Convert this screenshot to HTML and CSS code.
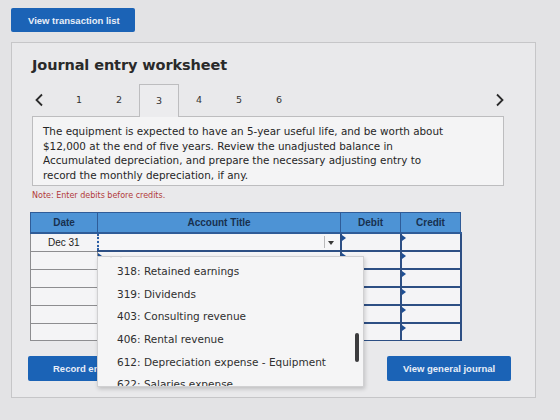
FILE: index.html
```html
<!DOCTYPE html>
<html lang="en">
<head>
<meta charset="UTF-8">
<meta name="viewport" content="width=device-width, initial-scale=1.0">
<title>Journal entry worksheet</title>
<link rel="stylesheet" href="styles.css">
</head>
<body>

<div class="page">
  <button class="btn btn-top">View transaction list</button>

  <div class="panel">
    <h1>Journal entry worksheet</h1>

    <div class="tabs">
      <span class="arrow">
        <svg width="10" height="14" viewBox="0 0 10 14"><polyline points="8,1.5 2.5,7 8,12.5" fill="none" stroke="#2b2b2b" stroke-width="1.8"/></svg>
      </span>
      <span class="tab">1</span>
      <span class="tab">2</span>
      <span class="tab active">3</span>
      <span class="tab">4</span>
      <span class="tab">5</span>
      <span class="tab">6</span>
      <span class="arrow right">
        <svg width="10" height="14" viewBox="0 0 10 14"><polyline points="2,1.5 7.5,7 2,12.5" fill="none" stroke="#2b2b2b" stroke-width="1.8"/></svg>
      </span>
    </div>

    <div class="question">
      The equipment is expected to have an 5-year useful life, and be worth about<br>
      $12,000 at the end of five years. Review the unadjusted balance in<br>
      Accumulated depreciation, and prepare the necessary adjusting entry to<br>
      record the monthly depreciation, if any.
    </div>

    <p class="note">Note: Enter debits before credits.</p>

    <div class="entry">
      <table class="journal">
        <thead>
          <tr>
            <th class="c-date">Date</th>
            <th class="c-acct">Account Title</th>
            <th class="c-num">Debit</th>
            <th class="c-num">Credit</th>
          </tr>
        </thead>
        <tbody>
          <tr>
            <td class="c-date">Dec 31</td>
            <td class="c-acct selected"><span class="caret"></span></td>
            <td class="c-num"></td>
            <td class="c-num"></td>
          </tr>
          <tr><td class="c-date"></td><td class="c-acct"></td><td class="c-num"></td><td class="c-num"></td></tr>
          <tr><td class="c-date"></td><td class="c-acct"></td><td class="c-num"></td><td class="c-num"></td></tr>
          <tr><td class="c-date"></td><td class="c-acct"></td><td class="c-num"></td><td class="c-num"></td></tr>
          <tr><td class="c-date"></td><td class="c-acct"></td><td class="c-num"></td><td class="c-num"></td></tr>
          <tr><td class="c-date"></td><td class="c-acct"></td><td class="c-num"></td><td class="c-num"></td></tr>
        </tbody>
      </table>

      <div class="actions">
        <button class="btn btn-record">Record entry</button>
        <button class="btn">View general journal</button>
      </div>

      <!-- open account picker -->
      <div class="picker">
        <ul>
          <li>318: Retained earnings</li>
          <li>319: Dividends</li>
          <li>403: Consulting revenue</li>
          <li>406: Rental revenue</li>
          <li>612: Depreciation expense - Equipment</li>
          <li>622: Salaries expense</li>
        </ul>
        <span class="thumb"></span>
      </div>
    </div>
  </div>
</div>

</body>
</html>
```

FILE: styles.css
```css
/* Page */
body {
  margin: 0;
  background: #e3e3e5;
  font-family: "DejaVu Sans", Verdana, sans-serif;
  color: #222;
}

.page {
  padding: 8px 11px;
}

/* Blue buttons */
.btn {
  background: #1b63b6;
  color: #e8eef8;
  border: 0;
  border-radius: 2px;
  font-family: "Liberation Sans", Arial, sans-serif;
  font-weight: bold;
  font-size: 9.5px;
  height: 24px;
  padding: 0 17px;
  white-space: nowrap;
  cursor: pointer;
}

.btn-top {
  width: 124px;
  text-align: left;
}

/* Worksheet panel */
.panel {
  margin-top: 10px;
  width: 525px;
  height: 356px;
  box-sizing: border-box;
  border: 1px solid #c6c6c8;
  background: #e9e9eb;
  padding: 0 20px;
}

.panel h1 {
  margin: 14px 0 0;
  font-size: 14.5px;
  font-weight: bold;
  color: #2a2a2a;
  letter-spacing: -0.1px;
}

/* Step tabs */
.tabs {
  display: flex;
  align-items: center;
  height: 32px;
  margin-top: 11px;
  font-size: 9.5px;
  color: #333;
}

.tabs .arrow {
  width: 27px;
  padding-left: 2px;
  display: flex;
  align-items: center;
  box-sizing: border-box;
}

.tabs .arrow.right {
  margin-left: auto;
  margin-right: 10px;
  width: auto;
}

.tab {
  width: 40px;
  text-align: center;
  height: 32px;
  line-height: 31px;
  box-sizing: border-box;
}

.tab.active {
  border: 1px solid #bdbdbf;
  border-bottom: 0;
  background: #ececee;
  height: 33px;
  position: relative;
  z-index: 1;
}

/* Question text */
.question {
  width: 472px;
  box-sizing: border-box;
  border: 1px solid #bdbdbf;
  background: #f4f4f5;
  padding: 7px 10px 3px;
  font-size: 10.4px;
  line-height: 14.5px;
  color: #262626;
}

.note {
  margin: 5px 0 0;
  font-size: 8px;
  color: #b23a3a;
}

/* Entry table */
.entry {
  position: relative;
  margin-top: 12px;
  margin-left: -2px;
}

.journal {
  border-collapse: collapse;
  table-layout: fixed;
  width: 427px;
  font-family: "Liberation Sans", Arial, sans-serif;
}

.journal th {
  background: #4d93d5;
  color: #18304f;
  font-size: 10px;
  font-weight: bold;
  height: 19px;
  border: 1px solid #2f5c98;
  border-bottom-width: 2px;
  padding: 0;
}

.journal td {
  height: 16px;
  padding: 0;
  border: 1px solid #2d4f84;
  border-width: 2px 2px 1px 1px;
  background: #f4f4f6;
  position: relative;
  font-size: 10px;
  color: #222;
}

.journal .c-date {
  width: 66px;
  text-align: center;
}

.journal td.c-date {
  border: 1px solid #8d8d90;
}

.journal .c-acct { width: 242px; }
.journal .c-num { width: 59px; }

/* blue corner marks on input cells */
.journal td.c-num::before,
.journal td.c-acct::before {
  content: "";
  position: absolute;
  left: 0;
  top: 1px;
  border-left: 4px solid #1e4f95;
  border-top: 3px solid transparent;
  border-bottom: 3px solid transparent;
}

.journal td.selected {
  border-top: 2px dotted #2d5fa6;
  border-bottom: 2px dotted #2d5fa6;
  border-left: 2px dotted #2d5fa6;
  background: #f6f6f8;
}

.journal td.selected::before { display: none; }

.caret {
  position: absolute;
  right: 5px;
  top: 2px;
  width: 10px;
  height: 12px;
  border-left: 1px solid #b9b9bb;
}

.caret::after {
  content: "";
  position: absolute;
  left: 3px;
  top: 5px;
  border-top: 4px solid #3a3a3a;
  border-left: 3px solid transparent;
  border-right: 3px solid transparent;
}

/* Buttons below the table */
.actions {
  display: flex;
  justify-content: space-between;
  width: 483px;
  margin-top: 15px;
  margin-left: -2px;
}

.actions .btn {
  width: 124px;
  height: 25px;
  padding: 0;
}

.actions .btn-record {
  text-align: left;
  padding-left: 25px;
}

/* Account dropdown */
.picker {
  position: absolute;
  left: 67px;
  top: 44px;
  width: 265px;
  height: 129px;
  background: #f5f5f6;
  border: 1px solid #d0d0d2;
  box-shadow: 1px 2px 4px rgba(0, 0, 0, 0.18);
  overflow: hidden;
  z-index: 2;
}

.picker::before {
  content: "";
  position: absolute;
  left: 14px;
  top: -4px;
  width: 7px;
  height: 7px;
  border-left: 1px solid #c8c8ca;
  border-top: 1px solid #c8c8ca;
  transform: rotate(45deg);
  background: #f5f5f6;
}

.picker ul {
  list-style: none;
  margin: 0;
  padding: 3px 0 0 19px;
  font-size: 10.5px;
  color: #2f2f2f;
}

.picker li {
  height: 22.7px;
  line-height: 22.7px;
  white-space: nowrap;
}

.picker .thumb {
  position: absolute;
  left: 257px;
  top: 76px;
  width: 4px;
  height: 29px;
  border-radius: 2px;
  background: #3c3c3e;
}
```
